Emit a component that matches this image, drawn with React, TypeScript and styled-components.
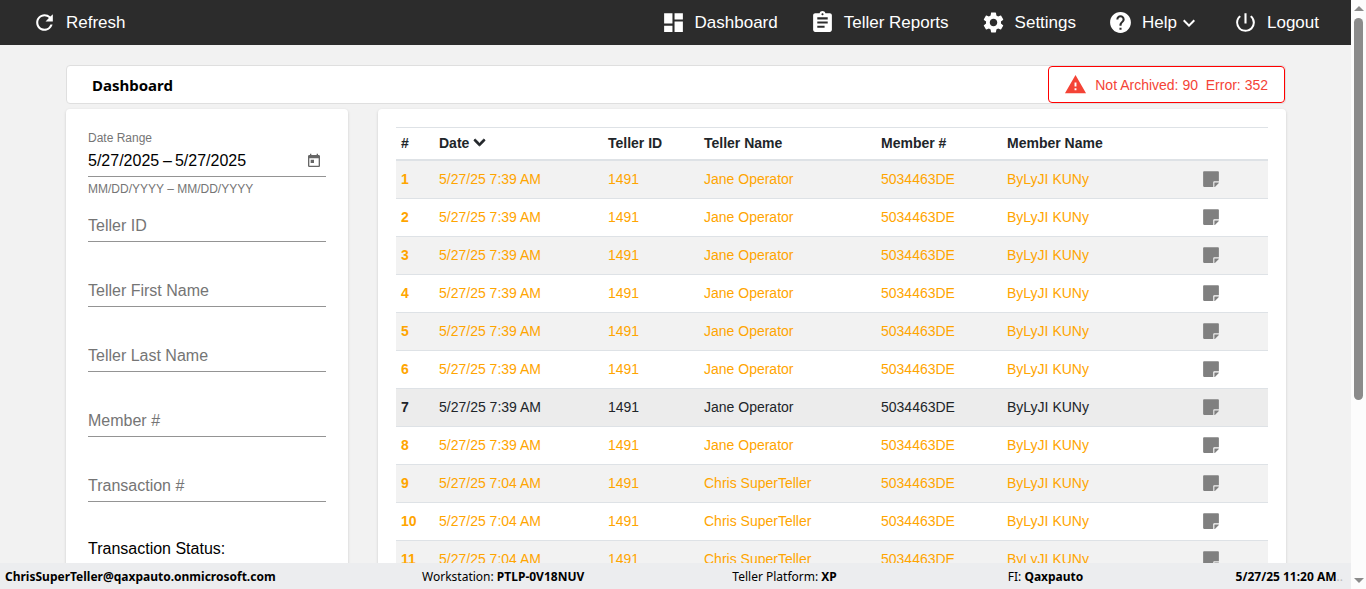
import React from "react";
import styled, { createGlobalStyle, css } from "styled-components";
import {
  MdRefresh,
  MdDashboard,
  MdAssignment,
  MdSettings,
  MdHelp,
  MdExpandMore,
  MdPowerSettingsNew,
  MdWarning,
  MdToday,
} from "react-icons/md";
import { FaChevronDown, FaStickyNote } from "react-icons/fa";

const sans = `"Liberation Sans", Arial, sans-serif`;
const humanist = `"Noto Sans", "Open Sans", sans-serif`;

const GlobalStyle = createGlobalStyle`
  *, *::before, *::after { box-sizing: border-box; }
  body { margin: 0; background: #f2f2f2; font-family: ${sans}; color: #000; overflow: hidden; }
  button, input { font: inherit; color: inherit; }
  svg { flex: none; }
`;

const Shell = styled.div`
  display: flex;
  height: 100vh;
`;

const Page = styled.div`
  flex: 1;
  min-width: 0;
  display: flex;
  flex-direction: column;
`;

const TopBar = styled.nav`
  flex: none;
  display: flex;
  align-items: center;
  justify-content: space-between;
  height: 45px;
  padding: 0 32px;
  background: #2c2c2c;
  color: #fff;
  font-size: 17px;
  line-height: 20px;
`;

const NavGroup = styled.div`
  display: flex;
  align-items: center;
  gap: 32px;
`;

const navItem = css`
  display: flex;
  align-items: center;
  padding: 0;
  border: 0;
  background: none;
  color: #fff;
  text-decoration: none;
  white-space: nowrap;
  cursor: pointer;
`;

const NavLink = styled.a`
  ${navItem}
`;

const NavButton = styled.button`
  ${navItem}
`;

const NavIcon = styled.span`
  display: flex;
  margin-right: 9px;
  font-size: 25px;
`;

const Main = styled.main`
  flex: 1;
  min-height: 0;
  overflow: hidden;
  padding: 20px 65px 0 66px;
`;

const TitleBar = styled.header`
  display: flex;
  align-items: center;
  justify-content: space-between;
  height: 39px;
  margin-bottom: 5px;
  padding-left: 25px;
  background: #fff;
  border: 1px solid #dfdfdf;
  border-radius: 4px;
`;

const Title = styled.h1`
  margin: 0;
  font-family: ${humanist};
  font-size: 15px;
  line-height: 20px;
  font-weight: 700;
`;

const AlertButton = styled.button`
  display: flex;
  align-items: center;
  height: 37px;
  padding: 0 16px 0 15px;
  gap: 8px;
  background: #fff;
  border: 1px solid #f00;
  border-radius: 4px;
  color: #f44336;
  font-size: 14px;
  white-space: pre;
  cursor: pointer;
`;

const Columns = styled.div`
  display: grid;
  grid-template-columns: 282px minmax(0, 1fr);
  gap: 30px;
`;

const Card = styled.section`
  background: #fff;
  border-radius: 4px;
  box-shadow: 0 1px 3px rgba(0, 0, 0, 0.16);
`;

const Filters = styled(Card)`
  padding: 22px;
`;

const TableCard = styled(Card)`
  padding: 18px;
`;

const DateField = styled.fieldset`
  display: flex;
  flex-direction: column;
  height: 46px;
  margin: 0;
  padding: 0;
  border: 0;
  border-bottom: 1px solid #949494;
`;

const FieldCaption = styled.span`
  font-size: 12px;
  line-height: 14px;
  color: #757575;
`;

const DateRow = styled.div`
  flex: 1;
  display: flex;
  align-items: center;
  gap: 3px;
  font-size: 16px;
`;

const DateInput = styled.input`
  width: 72px;
  padding: 0;
  border: 0;
  background: none;
  outline: 0;
`;

const CalendarButton = styled.button`
  display: flex;
  margin-left: auto;
  margin-right: 4px;
  padding: 0;
  border: 0;
  background: none;
  color: #666;
  font-size: 16px;
  cursor: pointer;
`;

const Hint = styled.div`
  height: 24px;
  font-size: 12px;
  line-height: 24px;
  color: #757575;
`;

const TextField = styled.input`
  display: block;
  width: 100%;
  height: 41px;
  margin-bottom: 24px;
  padding: 10px 0 0;
  border: 0;
  border-bottom: 1px solid #949494;
  border-radius: 0;
  background: none;
  outline: 0;
  font-size: 16px;

  &::placeholder {
    color: #757575;
    opacity: 1;
  }
`;

const StatusHeading = styled.div`
  padding-top: 13px;
  font-size: 16px;
  line-height: 20px;
`;

const Table = styled.table`
  width: 100%;
  table-layout: fixed;
  border-spacing: 0;
  border-top: 1px solid #dee2e6;
  font-size: 14px;
  line-height: 20px;
  color: #212529;
  text-align: left;
`;

const Col = styled.col<{ $w: number }>`
  width: ${(p) => p.$w}px;
`;

const HeadCell = styled.th`
  height: 33px;
  padding: 0 5px 2px;
  border-bottom: 2px solid #dee2e6;
  font-weight: 700;
  white-space: nowrap;
`;

const SortButton = styled.button`
  display: flex;
  align-items: center;
  gap: 4px;
  padding: 0;
  border: 0;
  background: none;
  font-weight: 700;
  cursor: pointer;

  svg {
    font-size: 13px;
    stroke-width: 36;
  }
`;

const Row = styled.tr<{ $active: boolean }>`
  color: ${(p) => (p.$active ? "#212529" : "#ffa500")};

  &:nth-child(odd) {
    background: ${(p) => (p.$active ? "#ececec" : "#f2f2f2")};
  }
`;

const cell = css`
  height: 38px;
  padding: 0 5px 2px;
  border-bottom: 1px solid #dee2e6;
  white-space: nowrap;
`;

const Cell = styled.td`
  ${cell}
`;

const RowNumber = styled.th`
  ${cell}
  font-weight: 700;
`;

const NoteCell = styled(Cell)`
  text-align: center;
  line-height: 0;
`;

const NoteButton = styled.button`
  display: inline-flex;
  vertical-align: middle;
  padding: 0;
  border: 0;
  background: none;
  color: #808080;
  font-size: 18px;
  cursor: pointer;
`;

const StatusBar = styled.footer`
  flex: none;
  display: grid;
  grid-template-columns: 418fr 311fr 276fr 215fr 121fr;
  align-items: center;
  height: 26px;
  padding: 1px 8px 0 5px;
  background: #ecedef;
  font-family: ${humanist};
  font-size: 12px;
  line-height: 20px;
  white-space: nowrap;
`;

const StatusTime = styled.span`
  justify-self: end;
`;

const Faded = styled.span`
  color: #bbb;
`;

const ScrollTrack = styled.div`
  flex: none;
  width: 15px;
  display: flex;
  flex-direction: column;
  align-items: center;
  justify-content: space-between;
  padding: 6px 0;
  background: #fcfcfc;
`;

const ScrollArea = styled.div`
  flex: 1;
  padding: 7px 0;
`;

const ScrollThumb = styled.div`
  width: 9px;
  height: 69%;
  border-radius: 5px;
  background: #8b8b8b;
`;

const ScrollArrow = styled.span<{ $down?: boolean }>`
  border: 5px solid transparent;
  ${(p) =>
    p.$down
      ? "border-top-color: #8b8b8b; border-bottom: 0;"
      : "border-bottom-color: #8b8b8b; border-top: 0;"}
`;

const columnWidths = [38, 169, 96, 177, 126, 152, 114];

const rows = Array.from({ length: 12 }, (_, i) => ({
  number: i + 1,
  date: i < 8 ? "5/27/25 7:39 AM" : "5/27/25 7:04 AM",
  tellerId: "1491",
  teller: i < 8 ? "Jane Operator" : "Chris SuperTeller",
  member: "5034463DE",
  memberName: "ByLyJI KUNy",
  active: i === 6,
}));

const textFields = [
  "Teller ID",
  "Teller First Name",
  "Teller Last Name",
  "Member #",
  "Transaction #",
];

export default function App() {
  return (
    <Shell>
      <GlobalStyle />
      <Page>
        <TopBar>
          <NavButton type="button">
            <NavIcon><MdRefresh /></NavIcon>
            Refresh
          </NavButton>
          <NavGroup>
            <NavLink href="#dashboard">
              <NavIcon><MdDashboard /></NavIcon>
              Dashboard
            </NavLink>
            <NavLink href="#reports">
              <NavIcon><MdAssignment /></NavIcon>
              Teller Reports
            </NavLink>
            <NavLink href="#settings">
              <NavIcon><MdSettings /></NavIcon>
              Settings
            </NavLink>
            <NavButton type="button" aria-haspopup="menu">
              <NavIcon><MdHelp /></NavIcon>
              Help
              <MdExpandMore size={24} />
            </NavButton>
            <NavButton type="button">
              <NavIcon><MdPowerSettingsNew /></NavIcon>
              Logout
            </NavButton>
          </NavGroup>
        </TopBar>

        <Main>
          <TitleBar>
            <Title>Dashboard</Title>
            <AlertButton type="button">
              <MdWarning size={23} />
              <span>{"Not Archived: 90  Error: 352"}</span>
            </AlertButton>
          </TitleBar>

          <Columns>
            <Filters>
              <DateField aria-label="Date Range">
                <FieldCaption>Date Range</FieldCaption>
                <DateRow>
                  <DateInput aria-label="Start date" defaultValue="5/27/2025" />
                  <span>–</span>
                  <DateInput aria-label="End date" defaultValue="5/27/2025" />
                  <CalendarButton type="button" aria-label="Open calendar">
                    <MdToday />
                  </CalendarButton>
                </DateRow>
              </DateField>
              <Hint>MM/DD/YYYY – MM/DD/YYYY</Hint>
              {textFields.map((label) => (
                <TextField key={label} type="text" aria-label={label} placeholder={label} />
              ))}
              <StatusHeading>Transaction Status:</StatusHeading>
            </Filters>

            <TableCard>
              <Table>
                <colgroup>
                  {columnWidths.map((w, i) => (
                    <Col key={i} $w={w} />
                  ))}
                </colgroup>
                <thead>
                  <tr>
                    <HeadCell scope="col">#</HeadCell>
                    <HeadCell scope="col">
                      <SortButton type="button">
                        Date <FaChevronDown />
                      </SortButton>
                    </HeadCell>
                    <HeadCell scope="col">Teller ID</HeadCell>
                    <HeadCell scope="col">Teller Name</HeadCell>
                    <HeadCell scope="col">Member #</HeadCell>
                    <HeadCell scope="col">Member Name</HeadCell>
                    <HeadCell scope="col" aria-label="Notes" />
                  </tr>
                </thead>
                <tbody>
                  {rows.map((r) => (
                    <Row key={r.number} $active={r.active}>
                      <RowNumber scope="row">{r.number}</RowNumber>
                      <Cell>{r.date}</Cell>
                      <Cell>{r.tellerId}</Cell>
                      <Cell>{r.teller}</Cell>
                      <Cell>{r.member}</Cell>
                      <Cell>{r.memberName}</Cell>
                      <NoteCell>
                        <NoteButton type="button" aria-label="Open note">
                          <FaStickyNote />
                        </NoteButton>
                      </NoteCell>
                    </Row>
                  ))}
                </tbody>
              </Table>
            </TableCard>
          </Columns>
        </Main>

        <StatusBar>
          <b>ChrisSuperTeller@qaxpauto.onmicrosoft.com</b>
          <span>Workstation: <b>PTLP-0V18NUV</b></span>
          <span>Teller Platform: <b>XP</b></span>
          <span>FI: <b>Qaxpauto</b></span>
          <StatusTime>
            <b>5/27/25 11:20 AM</b>
            <Faded>..</Faded>
          </StatusTime>
        </StatusBar>
      </Page>

      <ScrollTrack aria-hidden="true">
        <ScrollArrow />
        <ScrollArea>
          <ScrollThumb />
        </ScrollArea>
        <ScrollArrow $down />
      </ScrollTrack>
    </Shell>
  );
}
